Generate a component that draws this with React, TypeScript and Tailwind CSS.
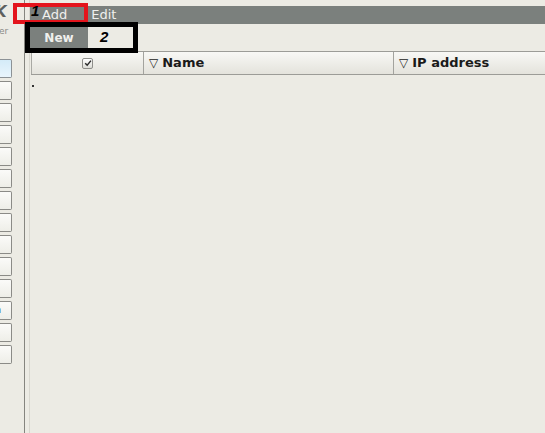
import React from 'react';

const sideItems = Array.from({ length: 14 }, (_, i) => i);

export default function App() {
  return (
    <div className="relative flex h-[433px] w-[545px] overflow-hidden bg-[#ecebe4] font-['DejaVu_Sans',sans-serif]">
      {/* Left nav strip, mostly cut off */}
      <aside className="flex w-[25px] shrink-0 flex-col border-r border-[#85857f]">
        <div className="h-[59px] overflow-hidden">
          <div className="-ml-[5px] mt-[4px] text-[15px] font-bold italic leading-[16px] text-[#5e605e]">K</div>
          <div className="-ml-[1px] mt-[6px] text-[9px] leading-[10px] text-[#8a8a86]">er</div>
        </div>
        <div className="flex flex-col gap-[3px]">
          {sideItems.map((i) => (
            <div
              key={i}
              className={
                i === 0
                  ? 'relative h-[19px] w-[12px] rounded-r-[2px] border border-l-0 border-[#8c9296] bg-gradient-to-b from-[#d4ebf8] to-[#e9f5fc]'
                  : 'relative h-[19px] w-[12px] rounded-r-[2px] border border-l-0 border-[#8b8b87] bg-gradient-to-b from-[#fbfbf9] to-[#eeeee8]'
              }
            >
              {i === 11 && <span className="absolute -left-[5px] top-[2px] text-[10px] leading-[12px] text-[#222]">a</span>}
            </div>
          ))}
        </div>
      </aside>
      <div className="w-[5px] shrink-0 border-r border-[#d8d7cf]" />

      {/* Main panel */}
      <main className="flex min-w-0 flex-1 flex-col pt-[6px]">
        <div className="flex h-[18px] items-center bg-[#7b807d] pl-[12px] text-[13px] leading-[18px] text-[#f0f0ee]">
          <span>Add</span>
          <span className="ml-[24px]">Edit</span>
        </div>
        <div className="flex h-[24px] items-stretch pt-[3px]">
          <button className="w-[58px] bg-[#7b807d] text-[12px] font-bold text-[#f0f0ee]">New</button>
        </div>

        <div className="ml-[1px] mt-[3px] flex h-[24px] border-y border-[#9c9c97] bg-gradient-to-b from-[#f8f8f5] to-[#e4e3dc] text-[13px] font-bold text-[#1a1a1a]">
          <div className="flex w-[112px] shrink-0 items-center justify-center border-l border-[#a9a9a4]">
            <span className="flex h-[11px] w-[11px] items-center justify-center rounded-[2px] border border-[#8e8e8a] bg-gradient-to-b from-[#ffffff] to-[#dcdcd6]">
              <svg viewBox="0 0 10 10" className="h-[8px] w-[8px]">
                <path d="M1.5 5.2 L4 7.8 L8.7 2" fill="none" stroke="#2a2a2a" strokeWidth="1.8" />
              </svg>
            </span>
          </div>
          <div className="flex w-[250px] shrink-0 items-center gap-[4px] border-l border-[#a3a39e] pl-[5px]">
            <span className="text-[12px] font-normal">▽</span>
            <span>Name</span>
          </div>
          <div className="flex flex-1 items-center gap-[4px] border-l border-[#a3a39e] pl-[5px]">
            <span className="text-[12px] font-normal">▽</span>
            <span className="whitespace-nowrap">IP address</span>
          </div>
        </div>
        <div className="ml-[2px] mt-[10px] h-[2px] w-[2px] bg-[#333]" />
      </main>

      {/* Annotation overlays */}
      <div className="pointer-events-none absolute left-[13px] top-[3px] h-[21px] w-[75px] border-4 border-[#e3141c]" />
      <div className="pointer-events-none absolute left-[25px] top-[22px] h-[31px] w-[113px] border-[5px] border-black" />
      <span className="absolute left-[31px] top-[3px] font-['Liberation_Sans',sans-serif] text-[15px] font-bold italic leading-[16px] text-black">1</span>
      <span className="absolute left-[100px] top-[29px] font-['Liberation_Sans',sans-serif] text-[15px] font-bold italic leading-[16px] text-black">2</span>
    </div>
  );
}
